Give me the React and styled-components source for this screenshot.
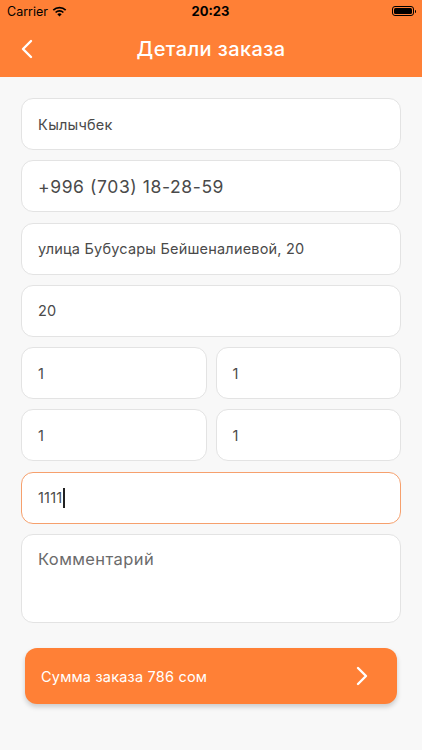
import React from "react";
import styled, { createGlobalStyle } from "styled-components";

const Global = createGlobalStyle`
  html, body { margin: 0; padding: 0; background: #f8f8f8; }
  body { font-family: "Inter", "Roboto", sans-serif; }
  * { box-sizing: border-box; }
`;

const ORANGE = "#ff8036";

const Screen = styled.div`
  width: 422px;
  height: 750px;
  background: #f8f8f8;
  display: flex;
  flex-direction: column;
  overflow: hidden;
`;

const Top = styled.div`
  background: ${ORANGE};
  height: 77px;
  display: flex;
  flex-direction: column;
`;

const StatusBar = styled.div`
  height: 22px;
  display: grid;
  grid-template-columns: 1fr auto 1fr;
  align-items: center;
  padding: 0 8px 0 7px;
  color: #000;
  font-family: "Inter", "Liberation Sans", sans-serif;
`;

const Carrier = styled.div`
  display: flex;
  align-items: center;
  gap: 4px;
  font-size: 12.5px;
`;

const Time = styled.div`
  font-size: 13px;
  font-weight: 700;
`;

const Right = styled.div`
  display: flex;
  justify-content: flex-end;
  align-items: center;
`;

const Battery = styled.div`
  width: 22px;
  height: 10px;
  border: 1px solid #000;
  border-radius: 3px;
  padding: 1px;
  position: relative;
  &::before {
    content: "";
    display: block;
    width: 100%;
    height: 100%;
    background: #000;
    border-radius: 1.5px;
  }
  &::after {
    content: "";
    position: absolute;
    right: -3px;
    top: 2.5px;
    width: 1.5px;
    height: 3.5px;
    background: #000;
    border-radius: 0 1px 1px 0;
  }
`;

const NavBar = styled.div`
  flex: 1;
  display: grid;
  grid-template-columns: 60px 1fr 60px;
  align-items: center;
  padding-bottom: 2px;
`;

const Back = styled.div`
  display: flex;
  align-items: center;
  padding-left: 21px;
`;

const Title = styled.div`
  text-align: center;
  color: #fff;
  font-size: 20px;
  font-weight: 500;
  letter-spacing: 0.4px;
`;

const Form = styled.div`
  display: flex;
  flex-direction: column;
  gap: 10.3px;
  padding: 21px 21px 0 21px;
`;

const Field = styled.div`
  height: ${(p) => p.h || 52}px;
  background: #fff;
  border: 1px solid ${(p) => (p.focused ? "#f6a06d" : "#e3e3e3")};
  border-radius: 12px;
  display: flex;
  align-items: ${(p) => (p.top ? "flex-start" : "center")};
  padding: ${(p) => (p.top ? "14px 16px" : "0 16px")};
  color: #4a4a4a;
  font-size: ${(p) => p.fs || 14.5}px;
  letter-spacing: ${(p) => p.ls || 0.2}px;
`;

const Caret = styled.span`
  display: inline-block;
  width: 2px;
  height: 20px;
  background: #222;
  margin-left: 1px;
`;

const Row = styled.div`
  display: grid;
  grid-template-columns: 1fr 1fr;
  gap: 9px;
`;

const Placeholder = styled.span`
  color: #6b6b6b;
`;

const SumButton = styled.div`
  margin: 25.5px 25px 0 25px;
  height: 56px;
  background: ${ORANGE};
  border-radius: 12px;
  box-shadow: 0 3px 5px rgba(0, 0, 0, 0.18);
  display: flex;
  align-items: center;
  justify-content: space-between;
  padding: 0 29px 0 16px;
  color: #fff;
  font-size: 14.5px;
  letter-spacing: 0.2px;
`;

const Wifi = () => (
  <svg width="15" height="11" viewBox="0 0 15 11">
    <path d="M7.5 10.5 L5.3 8.2 A3.2 3.2 0 0 1 9.7 8.2 Z" fill="#000" />
    <path d="M3.6 6.5 A5.6 5.6 0 0 1 11.4 6.5" stroke="#000" strokeWidth="1.7" fill="none" />
    <path d="M1.3 4.1 A8.8 8.8 0 0 1 13.7 4.1" stroke="#000" strokeWidth="1.7" fill="none" />
  </svg>
);

const Chevron = ({ dir = "left", size = 20 }) => (
  <svg width={size * 0.6} height={size} viewBox="0 0 12 20">
    <path
      d={dir === "left" ? "M10 2 L2 10 L10 18" : "M2 2 L10 10 L2 18"}
      stroke="#fff"
      strokeWidth="2.4"
      fill="none"
      strokeLinecap="round"
      strokeLinejoin="round"
    />
  </svg>
);

export default function App() {
  return (
    <>
      <Global />
      <Screen>
        <Top>
          <StatusBar>
            <Carrier>
              Carrier <Wifi />
            </Carrier>
            <Time>20:23</Time>
            <Right>
              <Battery />
            </Right>
          </StatusBar>
          <NavBar>
            <Back>
              <Chevron dir="left" size={20} />
            </Back>
            <Title>Детали заказа</Title>
            <div />
          </NavBar>
        </Top>
        <Form>
          <Field>Кылычбек</Field>
          <Field fs={17.5} ls={0.6}>+996 (703) 18-28-59</Field>
          <Field>улица Бубусары Бейшеналиевой, 20</Field>
          <Field>20</Field>
          <Row>
            <Field>1</Field>
            <Field>1</Field>
          </Row>
          <Row>
            <Field>1</Field>
            <Field>1</Field>
          </Row>
          <Field focused>
            1111<Caret />
          </Field>
          <Field h={88.5} top fs={16.5} ls={0.4}>
            <Placeholder>Комментарий</Placeholder>
          </Field>
        </Form>
        <SumButton>
          <span>Сумма заказа 786 сом</span>
          <Chevron dir="right" size={20} />
        </SumButton>
      </Screen>
    </>
  );
}
